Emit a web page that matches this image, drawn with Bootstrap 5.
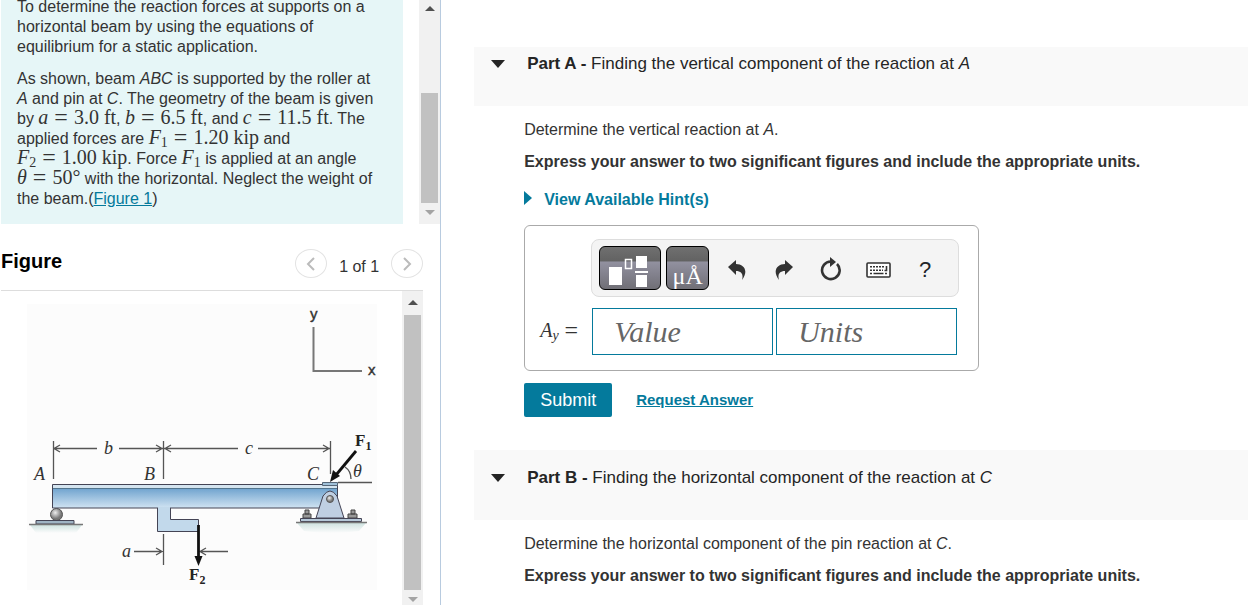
<!DOCTYPE html>
<html lang="en">
<head>
<meta charset="utf-8">
<meta name="viewport" content="width=device-width, initial-scale=1">
<title>Beam reactions</title>
<link href="https://cdn.jsdelivr.net/npm/bootstrap@5.3.0/dist/css/bootstrap.min.css" rel="stylesheet">
<style>
  body { font: 16px/20px "Liberation Sans", Arial, sans-serif; color: #333; background: #fff; }
  a, .hint-btn { color: #047a9c; }
  .left-pane { flex: 0 0 35.35%; border-right: 1px solid #b8cbdf; }
  .intro-row { height: 224px; }
  .intro { background: #e6f6f7; margin-left: 1px; padding: 0 16px 15px; }
  .intro p { margin: 0 0 12px; }
  .intro p:last-child { margin: 0; }
  .math { font: 20px/0 "Liberation Serif", "Times New Roman", serif; white-space: nowrap; }
  .math sub { font-size: 14px; line-height: 0; bottom: -3px; }
  .eq { font-size: 24px; line-height: 0; margin: 0 1px; vertical-align: -1px; }
  .scroller { background: #f1f1f1; width: 21px; }
  .scroller svg { display: block; margin: 0 auto; }
  .thumb { background: #c1c1c1; margin: 0 2px; }
  .fig-head { height: 51px; margin: 16px 17px 0 1px; padding-top: 9px; border-bottom: 1px solid #ddd; }
  .fig-head h2 { font-size: 20px; line-height: 24px; font-weight: bold; color: #000; }
  .round-btn { width: 32px; height: 29px; border: 1px solid #e3e3e3; border-radius: 50%; background: #fff; }
  .fig-body { margin-right: 17px; }
  .fig-body .drawing { padding: 13px 0 0 27px; }
  .content { padding: 47px 0 0 33px; }
  .part-head { background: #f9f9f9; padding-left: 17px; color: #252525; }
  .part-head h2 { font-size: 17px; line-height: 22px; font-weight: normal; padding-left: 22px; }
  .part-a { height: 59px; padding-top: 6px; }
  .part-b { height: 70px; padding-top: 17px; margin-top: 33px; }
  .toggle-btn { width: 14px; height: 22px; }
  .part-body { padding: 14px 0 0 50px; }
  .part-body p { margin: 0 0 12px; }
  .hint-btn { font-weight: bold; margin: 18px 0 15px; }
  .answer { width: 455px; max-width: 100%; height: 146px; border: 1px solid #aaa; border-radius: 6px; padding: 13px 19px 0 15px; }
  .tools { width: 368px; height: 58px; background: #f4f4f4; border: 1px solid #ddd; border-radius: 8px; padding: 6px 7px; }
  .dark-btn { height: 44px; border: 1px solid #000; border-radius: 6px; background: linear-gradient(#707070, #626262 34%, #9291a0 35%, #706f76); }
  .wide-btn { width: 62px; }
  .slim-btn { width: 43px; margin-left: 5px; }
  .tool-row { gap: 15px; margin-left: 12px; padding-top: 2px; }
  .tool-btn { height: 42px; width: 32px; }
  .help-btn { font-size: 22px; }
  .mu { font: 24px/26px "Liberation Serif", serif; color: #fff; }
  .fields { gap: 3px; margin-top: 11px; padding-right: 2px; }
  .math-in { border: 1px solid #047a9c; height: 47px; padding: 0 21px; font: italic 30px "Liberation Serif", serif; width: 181px; min-width: 0; color: #333; }
  .math-in::placeholder { color: #666; opacity: 1; }
  .submit-btn { background: #047a9c; color: #fff; font-size: 18px; line-height: 22px; border-radius: 2px; padding: 6px 16px; }
  .request { font-size: 15px; font-weight: bold; }
</style>
</head>
<body>
<div class="d-flex vh-100 overflow-hidden">
  <aside class="left-pane d-flex flex-column">
    <div class="intro-row d-flex justify-content-between flex-shrink-0">
      <section class="intro flex-grow-1 d-flex flex-column justify-content-end overflow-hidden">
        <p>To determine the reaction forces at supports on a horizontal beam by using the equations of equilibrium for a static application.</p>
        <p>As shown, beam <i>ABC</i> is supported by the roller at<br><i>A</i> and pin at <i>C</i>. The geometry of the beam is given<br>by <span class="math"><i>a</i> <span class="eq">=</span> 3.0 ft</span>, <span class="math"><i>b</i> <span class="eq">=</span> 6.5 ft</span>, and <span class="math"><i>c</i> <span class="eq">=</span> 11.5 ft</span>. The<br>applied forces are <span class="math"><i>F</i><sub>1</sub> <span class="eq">=</span> 1.20 kip</span> and<br><span class="math"><i>F</i><sub>2</sub> <span class="eq">=</span> 1.00 kip</span>. Force <span class="math"><i>F</i><sub>1</sub></span> is applied at an angle<br><span class="math"><i>θ</i> <span class="eq">=</span> 50°</span> with the horizontal. Neglect the weight of<br>the beam.(<a href="#figure">Figure 1</a>)</p>
      </section>
      <div class="scroller flex-shrink-0 ms-3 d-flex flex-column justify-content-between">
        <svg width="10" height="12"><path d="M0 11 5 6l5 5z" fill="#505050"/></svg>
        <div class="mt-auto">
          <div class="thumb" style="height:110px"></div>
          <svg width="10" height="21"><path d="M0 7h10l-5 5z" fill="#a3a3a3"/></svg>
        </div>
      </div>
    </div>
    <div class="fig-head d-flex justify-content-between flex-shrink-0" id="figure">
      <h2 class="m-0">Figure</h2>
      <div class="d-flex align-items-start">
        <button class="round-btn p-0" aria-label="Previous figure"><svg width="10" height="14" viewBox="0 0 10 14" fill="none" stroke="#bbb" stroke-width="2"><path d="M8 1 2 7l6 6"/></svg></button>
        <span class="px-2 mx-1 pt-2">1 of 1</span>
        <button class="round-btn p-0" aria-label="Next figure"><svg width="10" height="14" viewBox="0 0 10 14" fill="none" stroke="#bbb" stroke-width="2"><path d="m2 1 6 6-6 6"/></svg></button>
      </div>
    </div>
    <div class="fig-body d-flex justify-content-between flex-grow-1 overflow-hidden">
      <div class="drawing">
        <svg class="d-block" width="350" height="286" viewBox="27 304 350 286" role="img" aria-label="Beam ABC with roller, pin and loads">
          <defs>
            <linearGradient id="steel" x2="0" y2="1"><stop stop-color="#6fa3cf"/><stop offset=".2" stop-color="#74a6d0"/><stop offset="1" stop-color="#d0e3f2"/></linearGradient>
            <radialGradient id="ball" cx=".4" cy=".35"><stop stop-color="#eee"/><stop offset="1" stop-color="#777"/></radialGradient>
            <linearGradient id="ground" x2="0" y2="1"><stop stop-color="#cfe3e0"/><stop offset="1" stop-color="#fcfcfc"/></linearGradient>
          </defs>
          <rect x="27" y="304" width="350" height="286" fill="#fcfcfc"/>
          <path d="M313.500 327v44H362" fill="none" stroke="#777" stroke-width="2"/>
          <g stroke="#555" stroke-width="1.300" fill="none">
            <path d="M53.500 441v38M163.500 441v38M330.500 441v33M54 448.500h43M119 448.500H238M258 448.500h72M60 445l-6 3.500 6 3.500M156 445l6 3.500-6 3.500M171 445l-6 3.500 6 3.500M323 445l6 3.500-6 3.500"/>
            <path d="M163.500 534v31M134 551.500h28M156 548l6 3.500-6 3.500M200 551.500h28M206 548l-6 3.500 6 3.500M338 482.500h34"/>
            <path d="M345 467q6 4 6 12"/>
          </g>
          <path d="M30 525h52l-6 8H36z" fill="url(#ground)"/>
          <path d="M297 523h69l-7 8q-28 4-55 0z" fill="url(#ground)"/>
          <circle cx="56.500" cy="514.500" r="6" fill="url(#ball)" stroke="#555"/>
          <path d="M36 520.500h38v3.500H36z" fill="#9fb4c4" stroke="#445"/><path d="M29 524.500h54" stroke="#777" stroke-width="1.500"/>
          <path d="M157.500 508h13v11.500h28v12h-41z" fill="#c2d9eb" stroke="#445"/>
          <path d="M52.500 484.500h285v23.500h-285z" fill="url(#steel)" stroke="#445"/>
          <path d="M53 485h284v3H53z" fill="#d5e5f0"/><path d="M53 488.500h284" stroke="#52758e"/>
          <path d="M158 507h12v3h-12z" fill="#c2d9eb"/>
          <path d="M322.500 482.500h15v3h-15z" fill="#9fc0d8" stroke="#567"/>
          <path d="M303 514h8v4h-8zm2-4h4v4h-4zM348 514h9v4h-9zm3-4h4v4h-4z" fill="#999" stroke="#444"/>
          <path d="m316 518 7-22q7-10 14 0l7 22z" fill="#bfcfe2" stroke="#445"/>
          <path d="M300.500 518.500h61v3h-61z" fill="#b5c8d8" stroke="#445"/><path d="M296 522.500h71" stroke="#777" stroke-width="1.500"/>
          <circle cx="330" cy="499" r="3.500" fill="url(#ball)" stroke="#555"/>
          <path d="m356 451-20 24" stroke="#111" stroke-width="2.800"/><path d="m330 482 3-12 7 6z" fill="#111"/>
          <path d="M198.500 525v34" stroke="#111" stroke-width="2.800"/><path d="m198.500 566-4-10h8z" fill="#111"/>
          <g font-family="Liberation Sans" font-size="15" fill="#333" stroke="#333" stroke-width=".4"><text x="310" y="319">y</text><text x="368" y="375">x</text></g>
          <g font-family="Liberation Serif" font-size="18" font-style="italic" fill="#333"><text x="34" y="480">A</text><text x="144" y="480">B</text><text x="307" y="480">C</text><text x="104" y="454">b</text><text x="245" y="454">c</text><text x="122" y="557">a</text><text x="353" y="477">θ</text></g>
          <g font-family="Liberation Serif" font-size="17" font-weight="bold" fill="#222"><text x="355" y="446">F<tspan font-size="12" dy="4">1</tspan></text><text x="189" y="580">F<tspan font-size="12" dy="4">2</tspan></text></g>
        </svg>
      </div>
      <div class="scroller flex-shrink-0 d-flex flex-column">
        <svg class="flex-shrink-0" width="10" height="24"><path d="M0 14 5 9l5 5z" fill="#505050"/></svg>
        <div class="thumb flex-grow-1"></div>
        <svg class="flex-shrink-0" width="10" height="15"><path d="M0 7h10l-5 5z" fill="#a3a3a3"/></svg>
      </div>
    </div>
  </aside>

  <main class="content flex-grow-1 overflow-hidden">
    <header class="part-head part-a d-flex align-items-start">
      <button class="toggle-btn btn p-0 border-0 d-flex align-items-center" aria-label="Collapse Part A"><svg width="14" height="8"><path d="M0 0h14L7 8z" fill="#252525"/></svg></button>
      <h2 class="m-0"><b>Part A -</b> Finding the vertical component of the reaction at <i>A</i></h2>
    </header>
    <div class="part-body">
      <p>Determine the vertical reaction at <i>A</i>.</p>
      <p><b>Express your answer to two significant figures and include the appropriate units.</b></p>
      <button class="hint-btn d-flex align-items-center bg-transparent border-0 p-0"><svg class="me-2" width="8" height="20"><path d="M0 1l8 7-8 7z" fill="#047a9c"/></svg><span class="ps-1">View Available Hint(s)</span></button>
      <form>
        <div class="answer">
          <div class="tools d-flex align-items-center ms-auto">
            <button type="button" class="dark-btn wide-btn p-0 flex-shrink-0" aria-label="Templates"><svg class="d-block" width="60" height="42" fill="#fff"><path d="M9 20h13v18H9zM36 9h11v12H36zM35 24h13v2H35zM36 28h11v12H36z"/><path d="M25.500 12.500h6v9h-6z" fill="none" stroke="#fff" stroke-width="1.500"/></svg></button>
            <button type="button" class="dark-btn slim-btn p-0 flex-shrink-0 d-flex align-items-end justify-content-center" aria-label="Units"><span class="mu">μÅ</span></button>
            <div class="tool-row d-flex">
              <button type="button" class="tool-btn btn p-0 border-0" aria-label="Undo"><svg width="18" height="20" viewBox="0 0 18 20"><path d="M0 7 8 0v4c8 0 13 7 6 16 1.500-5 0-9-6-9v4z" fill="#333"/></svg></button>
              <button type="button" class="tool-btn btn p-0 border-0" aria-label="Redo"><svg width="18" height="20" viewBox="0 0 18 20"><path d="M18 7 10 0v4c-8 0-13 7-6 16-1.500-5 0-9 6-9v4z" fill="#333"/></svg></button>
              <button type="button" class="tool-btn btn p-0 border-0" aria-label="Reset"><svg width="22" height="24" viewBox="0 0 22 24"><path d="M11 4.500A8.800 8.800 0 1 0 17 7" fill="none" stroke="#333" stroke-width="2.600"/><path d="m10 0 6 5-6 5z" fill="#333"/></svg></button>
              <button type="button" class="tool-btn btn p-0 border-0" aria-label="Keyboard"><svg width="25" height="16" viewBox="0 0 25 16"><rect x="1" y="1" width="23" height="14" rx="1" fill="#fff" stroke="#333" stroke-width="1.600"/><path d="M4 4.800h15M4 8.200h13" stroke="#333" stroke-width="1.600" stroke-dasharray="2 1"/><path d="M4 11.500h2M7.500 11.500h10M19 11.500h2M20.500 4v4.500h-2" fill="none" stroke="#333" stroke-width="1.600"/></svg></button>
              <button type="button" class="tool-btn help-btn btn p-0 border-0" aria-label="Help">?</button>
            </div>
          </div>
          <div class="fields d-flex align-items-center">
            <label class="math flex-grow-1" for="val"><i>A<sub>y</sub></i> <span class="eq">=</span></label>
            <input class="math-in" id="val" type="text" placeholder="Value">
            <input class="math-in" id="unit" type="text" placeholder="Units" aria-label="Units">
          </div>
        </div>
        <div class="d-flex align-items-center mt-2 pt-1">
          <button type="button" class="submit-btn border-0">Submit</button>
          <a class="request ms-4" href="#request">Request Answer</a>
        </div>
      </form>
    </div>
    <header class="part-head part-b d-flex align-items-start">
      <button class="toggle-btn btn p-0 border-0 d-flex align-items-center" aria-label="Collapse Part B"><svg width="14" height="8"><path d="M0 0h14L7 8z" fill="#252525"/></svg></button>
      <h2 class="m-0"><b>Part B -</b> Finding the horizontal component of the reaction at <i>C</i></h2>
    </header>
    <div class="part-body">
      <p>Determine the horizontal component of the pin reaction at <i>C</i>.</p>
      <p><b>Express your answer to two significant figures and include the appropriate units.</b></p>
    </div>
  </main>
</div>
<script src="https://cdn.jsdelivr.net/npm/bootstrap@5.3.0/dist/js/bootstrap.bundle.min.js"></script>
</body>
</html>
